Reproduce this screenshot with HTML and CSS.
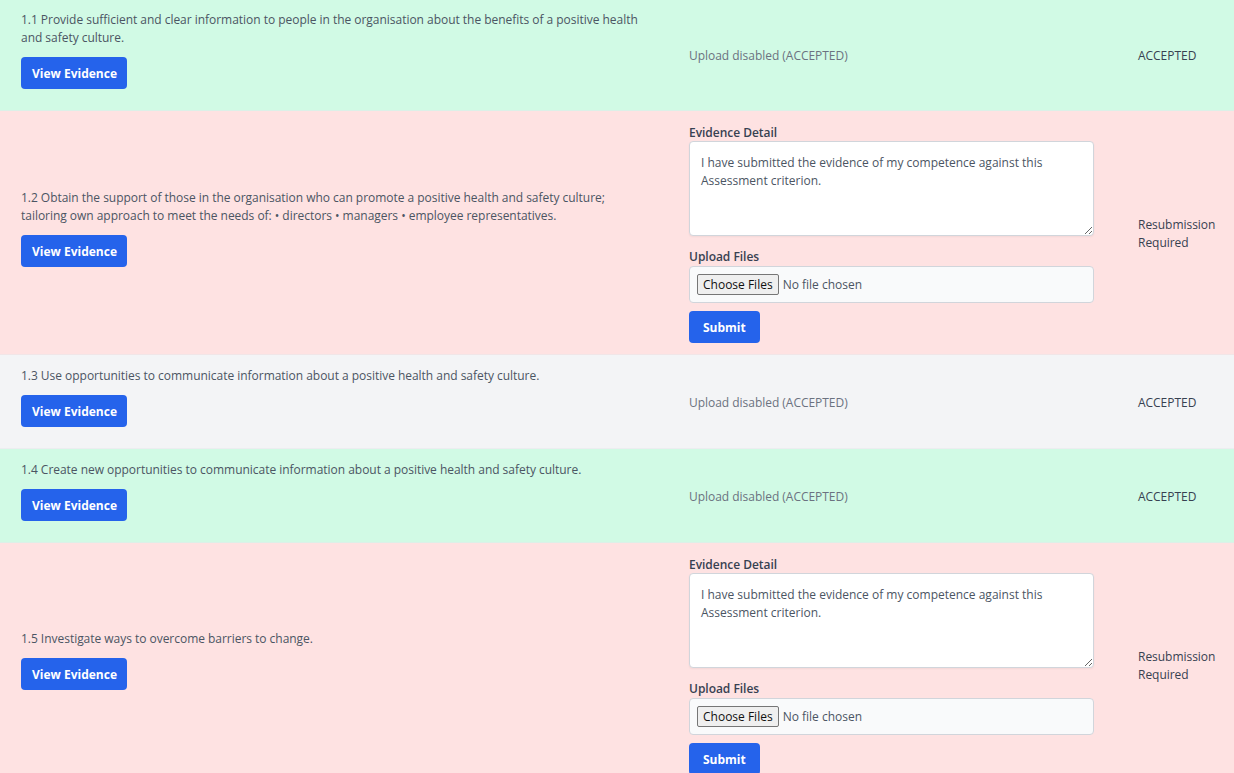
FILE: index.html
```html
<!DOCTYPE html>
<html lang="en">
<head>
<meta charset="utf-8">
<title>Assessment Criteria</title>
<link rel="stylesheet" href="styles.css">
</head>
<body>
<div class="criteria">
  <div class="row row-accepted">
    <div class="cell cell-main">
      <p class="crit-text">1.1 Provide sufficient and clear information to people in the organisation about the benefits of a positive health and safety culture.</p>
      <div class="btn-wrap"><button class="btn">View Evidence</button></div>
    </div>
    <div class="cell cell-upload"><span class="muted">Upload disabled (ACCEPTED)</span></div>
    <div class="cell cell-status">ACCEPTED</div>
  </div>

  <div class="row row-resubmit">
    <div class="cell cell-main">
      <p class="crit-text">1.2 Obtain the support of those in the organisation who can promote a positive health and safety culture; tailoring own approach to meet the needs of: • directors • managers • employee representatives.</p>
      <div class="btn-wrap"><button class="btn">View Evidence</button></div>
    </div>
    <div class="cell cell-form">
      <label class="field-label">Evidence Detail</label>
      <textarea class="evidence" rows="4">I have submitted the evidence of my competence against this Assessment criterion.</textarea>
      <label class="field-label">Upload Files</label>
      <div class="file-box"><input class="file-input" type="file" multiple></div>
      <button class="btn btn-submit">Submit</button>
    </div>
    <div class="cell cell-status">Resubmission Required</div>
  </div>

  <div class="row row-neutral">
    <div class="cell cell-main">
      <p class="crit-text">1.3 Use opportunities to communicate information about a positive health and safety culture.</p>
      <div class="btn-wrap"><button class="btn">View Evidence</button></div>
    </div>
    <div class="cell cell-upload"><span class="muted">Upload disabled (ACCEPTED)</span></div>
    <div class="cell cell-status">ACCEPTED</div>
  </div>

  <div class="row row-accepted">
    <div class="cell cell-main">
      <p class="crit-text">1.4 Create new opportunities to communicate information about a positive health and safety culture.</p>
      <div class="btn-wrap"><button class="btn">View Evidence</button></div>
    </div>
    <div class="cell cell-upload"><span class="muted">Upload disabled (ACCEPTED)</span></div>
    <div class="cell cell-status">ACCEPTED</div>
  </div>

  <div class="row row-resubmit">
    <div class="cell cell-main">
      <p class="crit-text">1.5 Investigate ways to overcome barriers to change.</p>
      <div class="btn-wrap"><button class="btn">View Evidence</button></div>
    </div>
    <div class="cell cell-form">
      <label class="field-label">Evidence Detail</label>
      <textarea class="evidence" rows="4">I have submitted the evidence of my competence against this Assessment criterion.</textarea>
      <label class="field-label">Upload Files</label>
      <div class="file-box"><input class="file-input" type="file" multiple></div>
      <button class="btn btn-submit">Submit</button>
    </div>
    <div class="cell cell-status">Resubmission Required</div>
  </div>
</div>
</body>
</html>
```

FILE: styles.css
```css
* { box-sizing: border-box; }

html, body {
  margin: 0;
  padding: 0;
}

body {
  font-family: "Open Sans", "Noto Sans", "Liberation Sans", sans-serif;
  font-size: 12px;
  line-height: 18px;
  letter-spacing: -0.03px;
  color: #374151;
  background: #ffffff;
}

.criteria {
  display: flex;
  flex-direction: column;
}

.row {
  display: grid;
  grid-template-columns: 668px 449px 1fr;
  border-bottom: 1px solid rgba(229, 231, 235, 0.55);
}

.row-accepted { background: #d1fae5; }
.row-resubmit { background: #fee2e2; }
.row-neutral  { background: #f3f4f6; }

.cell {
  padding: 12px 21px 11px 21px;
  display: flex;
  flex-direction: column;
  justify-content: center;
}

.crit-text {
  margin: 0;
  color: #4b5563;
}

.btn-wrap {
  margin: 10px 0 10px 0;
}

.btn {
  display: inline-flex;
  align-items: center;
  justify-content: center;
  height: 32px;
  padding: 0 10px 0 11px;
  border: none;
  border-radius: 4px;
  background: #2563eb;
  color: #ffffff;
  font-family: inherit;
  font-size: 12px;
  font-weight: 700;
  letter-spacing: 0;
  cursor: pointer;
}

.muted {
  color: #6b7280;
}

.cell-upload {
  padding-top: 13px;
  padding-bottom: 10px;
}

.cell-form {
  justify-content: flex-start;
  padding-right: 23px;
}

.cell-status {
  color: #374151;
  padding-top: 13px;
  padding-bottom: 10px;
}

.row:first-child .cell-main {
  padding-top: 11px;
}

.row:first-child .cell-upload,
.row:first-child .cell-status {
  padding-top: 12px;
  padding-bottom: 10px;
}

.field-label {
  display: block;
  font-weight: 600;
  color: #374151;
  line-height: 20px;
  margin-bottom: -2px;
}

.evidence {
  display: block;
  width: 100%;
  height: 95px;
  margin: 0 0 11px 0;
  padding: 12px 11px 8px 11px;
  border: 1px solid #d1d5db;
  border-radius: 4px;
  background: #ffffff;
  box-shadow: 0 1px 2px rgba(0, 0, 0, 0.05);
  font-family: inherit;
  font-size: 12px;
  line-height: 18px;
  color: #4b5563;
  resize: vertical;
}

.file-box {
  margin-top: 1px;
  height: 37px;
  display: flex;
  align-items: center;
  padding: 0 7px;
  border: 1px solid #d1d5db;
  border-radius: 4px;
  background: #f9fafb;
}

.file-input {
  font-family: inherit;
  font-size: 12px;
  color: #4b5563;
}

.file-input::file-selector-button {
  font-family: inherit;
  font-size: 12px;
  color: #111111;
  height: 21px;
  padding: 0 5px;
  margin-right: 4px;
  background: #efefef;
  border: 1px solid #767676;
  border-radius: 2px;
}

.btn-submit {
  margin-top: 8px;
  align-self: flex-start;
  padding: 0 14px;
}
```
